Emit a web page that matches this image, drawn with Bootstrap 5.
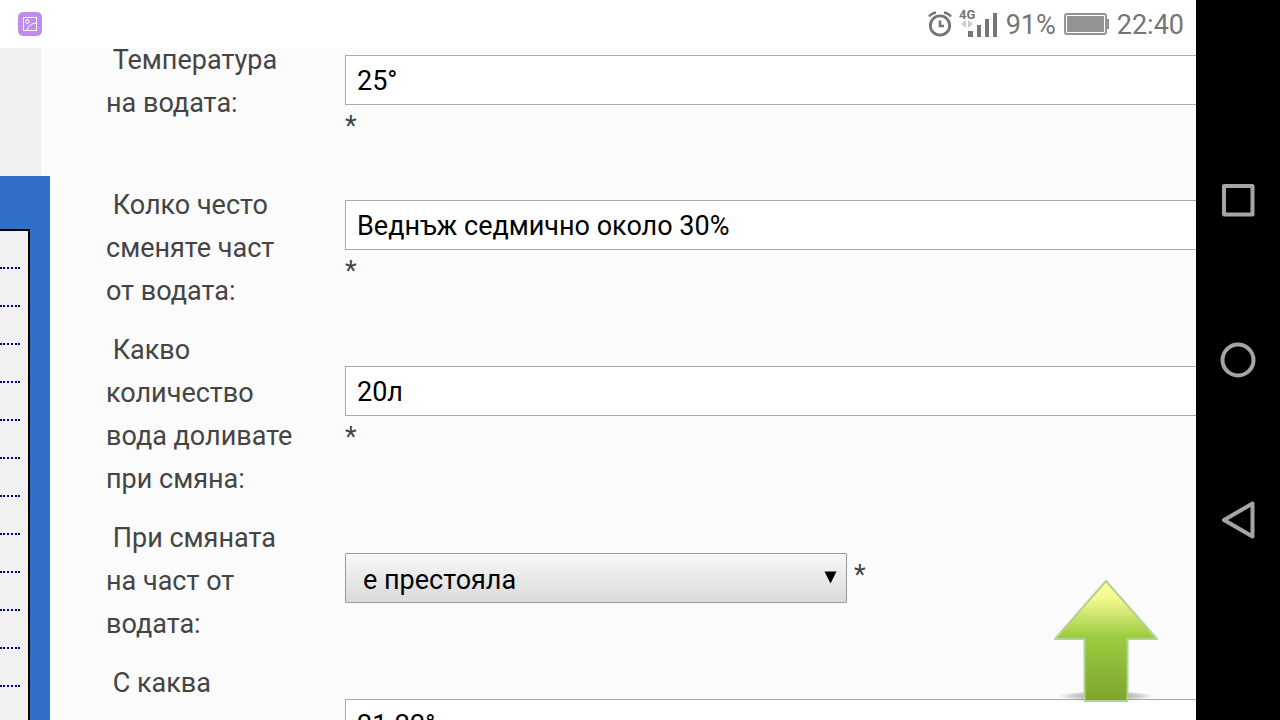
<!DOCTYPE html>
<html lang="bg">
<head>
<meta charset="utf-8">
<meta name="viewport" content="width=device-width, initial-scale=1">
<title>Форум</title>
<link href="https://cdn.jsdelivr.net/npm/bootstrap@5.3.0/dist/css/bootstrap.min.css" rel="stylesheet">
<style>
body { font-family: Roboto, "Noto Sans", sans-serif; font-size: 27px; line-height: 43px; color: #444; background: #fbfbfb; }
.status-bar { height: 48px; background: #fff; color: #757575; padding: 0 12px 0 18px; z-index: 2; }
.status-bar span { padding-top: 3px; }
.status-icons { gap: 6px; margin-right: 7px; }
.side { width: 50px; }
.side-top { width: 41px; height: 128px; background: #efefef; }
.side-panel { background: #3070c8; padding: 53px 20px 0 0; }
.side-list { background: #f1f1f1; border: solid #000; border-width: 2px 2px 0 0; padding-right: 8px; }
.side-list a { display: block; height: 38px; border-bottom: 2px dotted #000080; }
.form-area { margin-top: -9px; padding-left: 56px; }
.q-row { margin-bottom: 16px; min-height: 129px; }
.q-label { width: 239px; padding-right: 43px; }
.q-label label::before { content: "\00a0"; }
.q-field { padding-bottom: 5px; }
.q-field .form-control, .q-field .form-select { height: 50px; border: 1px solid #a9a9a9; border-radius: 0; font-size: 27px; color: #000; line-height: 40px; }
.q-field .form-control { padding: 6px 11px 4px; border-right: 0; background: #fff; }
.q-field .form-select { border-radius: 1px; border-color: #999; padding: 6px 17px 4px; background: linear-gradient(#f8f8f8, #dadada); }
.q-choice { padding-bottom: 7px; }
.pick { width: 502px; }
.pick svg { top: 18px; right: 10px; }
.q-choice span { padding-bottom: 5px; margin-left: 7px; }
.to-top { right: 36px; bottom: 17px; line-height: 0; }
.nav-keys { width: 84px; background: #000; }
.nav-keys button { height: 160px; line-height: 0; }
</style>
</head>
<body class="vh-100 overflow-hidden d-flex">
<div class="flex-grow-1 d-flex flex-column overflow-hidden position-relative">
  <header class="status-bar d-flex align-items-center flex-shrink-0 position-relative">
    <svg width="24" height="24" viewBox="0 0 24 24" fill="none" stroke="#fff" aria-hidden="true">
      <rect width="24" height="24" rx="5" fill="#c08deb" stroke="none"/>
      <rect x="5.500" y="5.500" width="13" height="13"/><circle cx="9.300" cy="9.500" r="1.800"/><path d="M9 18.500C10 14 13 11.500 18.500 11"/>
    </svg>
    <div class="ms-auto d-flex align-items-center">
      <div class="status-icons d-flex align-items-center">
        <svg width="24" height="26" viewBox="0 0 24 26" fill="none" stroke="#757575" aria-hidden="true">
          <circle cx="12" cy="14.500" r="9.700" stroke-width="2.800"/><path d="M12 9.500V15H16" stroke-width="2.600"/><path d="M1 5.500Q4 2 8 1.500M23 5.500Q20 2 16 1.500" stroke-width="2.400"/>
        </svg>
        <svg width="41" height="34" viewBox="0 0 41 34" fill="#757575" role="img" aria-label="4G">
          <text x="1" y="12" font-size="13" font-weight="700">4G</text>
          <path d="M8 13V21L3 17ZM10 13V21L15 17Z" fill="#ccc"/>
          <rect x="10" y="24" width="5" height="6"/><rect x="19" y="18" width="4" height="12"/><rect x="27" y="12" width="4" height="18"/><rect x="35" y="6" width="4" height="24"/>
        </svg>
      </div>
      <span class="me-2">91%</span>
      <svg class="me-2" width="45" height="22" viewBox="0 0 45 22" aria-hidden="true">
        <rect x="1" y="1" width="41" height="20" rx="2" fill="#fff" stroke="#939393" stroke-width="2"/><rect x="3" y="3" width="37" height="16" fill="#939393"/><rect x="42" y="6" width="3" height="10" fill="#939393"/>
      </svg>
      <span>22:40</span>
    </div>
  </header>
  <div class="d-flex flex-grow-1 overflow-hidden">
    <aside class="side d-flex flex-column flex-shrink-0">
      <div class="side-top flex-shrink-0"></div>
      <div class="side-panel d-flex flex-column flex-grow-1 overflow-hidden">
        <nav class="side-list flex-grow-1 overflow-hidden" aria-label="Меню">
          <a href="#"></a><a href="#"></a><a href="#"></a><a href="#"></a><a href="#"></a><a href="#"></a><a href="#"></a><a href="#"></a><a href="#"></a><a href="#"></a><a href="#"></a><a href="#"></a><a href="#"></a>
        </nav>
      </div>
    </aside>
    <main class="flex-grow-1 overflow-hidden">
      <form class="form-area">
        <div class="q-row d-flex">
          <div class="q-label flex-shrink-0"><label for="temp">Температура на водата:</label></div>
          <div class="q-field flex-grow-1 align-self-center"><input class="form-control" id="temp" value="25°"><div>*</div></div>
        </div>
        <div class="q-row d-flex">
          <div class="q-label flex-shrink-0"><label for="often">Колко често сменяте част от водата:</label></div>
          <div class="q-field flex-grow-1 align-self-center"><input class="form-control" id="often" value="Веднъж седмично около 30%"><div>*</div></div>
        </div>
        <div class="q-row d-flex">
          <div class="q-label flex-shrink-0"><label for="amount">Какво количество вода доливате при смяна:</label></div>
          <div class="q-field flex-grow-1 align-self-center"><input class="form-control" id="amount" value="20л"><div>*</div></div>
        </div>
        <div class="q-row d-flex">
          <div class="q-label flex-shrink-0"><label for="change">При смяната на част от водата:</label></div>
          <div class="q-field q-choice flex-grow-1 align-self-center d-flex align-items-center">
            <div class="pick position-relative">
              <select class="form-select" id="change"><option>е престояла</option></select>
              <svg class="position-absolute pe-none" width="13" height="13" viewBox="0 0 13 13" aria-hidden="true"><path d="M0.500 0.500H12.500L6.500 12.500Z"/></svg>
            </div>
            <span>*</span>
          </div>
        </div>
        <div class="q-row d-flex">
          <div class="q-label flex-shrink-0"><label for="fresh">С каква температура е водата, която доливате:</label></div>
          <div class="q-field flex-grow-1 align-self-center"><input class="form-control" id="fresh" value="21-22°"><div>*</div></div>
        </div>
      </form>
    </main>
  </div>
  <a class="to-top position-absolute" href="#" aria-label="Нагоре">
    <svg width="108" height="130" viewBox="0 0 108 130" aria-hidden="true">
      <defs>
        <linearGradient id="leaf" x1="0" y1="0" x2="0" y2="1"><stop offset="0" stop-color="#ffffa8"/><stop offset=".15" stop-color="#f3f88f"/><stop offset=".46" stop-color="#9ccc40"/><stop offset="1" stop-color="#7da52f"/></linearGradient>
        <radialGradient id="shade"><stop offset="0" stop-color="#000" stop-opacity=".4"/><stop offset=".7" stop-color="#000" stop-opacity=".18"/><stop offset="1" stop-color="#000" stop-opacity="0"/></radialGradient>
      </defs>
      <ellipse cx="54" cy="123" rx="48" ry="5" fill="url(#shade)"/>
      <path d="M54 8L105 66H75.500V128H32.500V66H3Z" fill="url(#leaf)" stroke="#b4d290" stroke-width="2" stroke-linejoin="round"/>
    </svg>
  </a>
</div>
<nav class="nav-keys d-flex flex-column justify-content-center flex-shrink-0" aria-label="Навигация">
  <button class="btn border-0 p-0" type="button" aria-label="Последни"><svg width="36" height="36" viewBox="0 0 36 36" fill="none" stroke="#a5a5a5" stroke-width="4" stroke-linejoin="round"><rect x="4" y="4" width="28.500" height="28.500"/></svg></button>
  <button class="btn border-0 p-0" type="button" aria-label="Начало"><svg width="36" height="36" viewBox="0 0 36 36" fill="none" stroke="#a5a5a5" stroke-width="4"><circle cx="18" cy="18" r="15.500"/></svg></button>
  <button class="btn border-0 p-0" type="button" aria-label="Назад"><svg width="36" height="40" viewBox="0 0 36 40" fill="none" stroke="#a5a5a5" stroke-width="4" stroke-linejoin="round"><path d="M4 20L32.500 3.500V36.500Z"/></svg></button>
</nav>
<script src="https://cdn.jsdelivr.net/npm/bootstrap@5.3.0/dist/js/bootstrap.bundle.min.js"></script>
</body>
</html>
